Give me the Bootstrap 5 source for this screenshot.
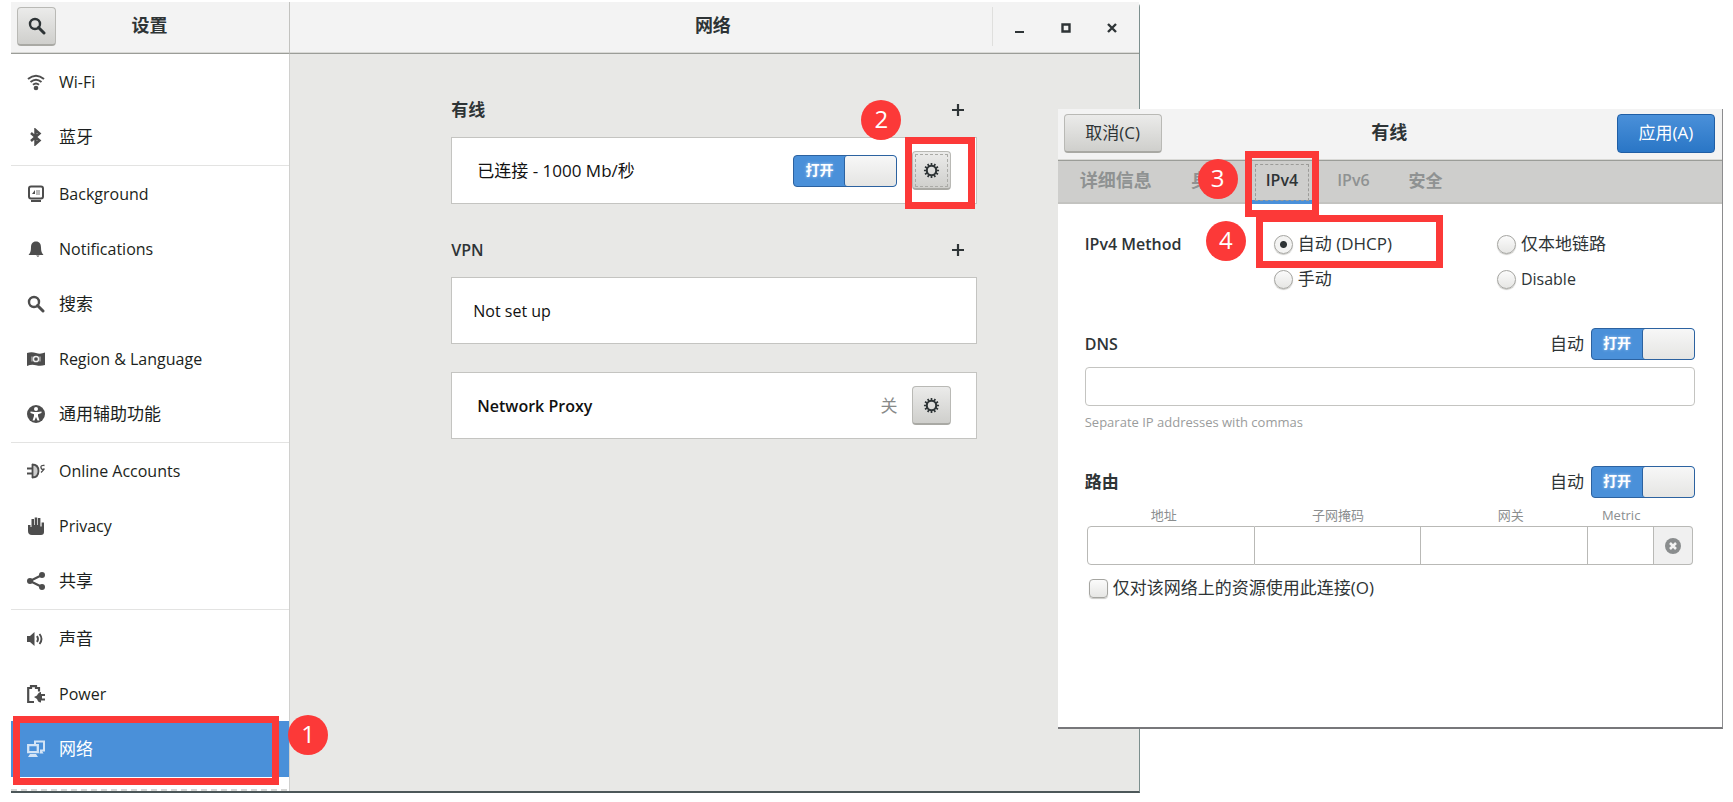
<!DOCTYPE html>
<html lang="zh-CN">
<head>
<meta charset="utf-8">
<meta name="viewport" content="width=device-width, initial-scale=1">
<title>设置 - 网络</title>
<link href="https://cdn.jsdelivr.net/npm/bootstrap@5.3.0/dist/css/bootstrap.min.css" rel="stylesheet">
<script src="https://cdn.jsdelivr.net/npm/bootstrap@5.3.0/dist/js/bootstrap.bundle.min.js"></script>
<style>
  :root { --ink: #2e3436; --blue: #4a90d9; --red: #fc3938; --line: #c4c4c1; --panel: #e8e8e6; }
  body { font-family: "Open Sans", "Noto Sans CJK SC", sans-serif; font-size: 16px; line-height: 24px; color: var(--ink); background: #fff; }
  .zh { font-size: 17px; }
  .title-zh { font-size: 18px; font-weight: 700; }
  .desktop { padding: 2px 10px 10px 11px; }

  /* windows */
  .main-window { flex: 1129 1 0; min-width: 0; border-right: 1px solid #7c8f8e; border-bottom: 2px solid #4c5759; border-radius: 0 5px 0 0; background: var(--panel); }
  .dialog-window { flex: 665 1 0; min-width: 0; margin: 107px 0 0 -82px; padding-bottom: 127px; background: #fff; border-right: 1px solid #8c8c8e; border-bottom: 2px solid #77777a; z-index: 2; }
  .sidebar { width: 279px; background: #fff; border-right: 1px solid #d0d0ce; }
  .bar { height: 52px; background: #f3f3f3; border-bottom: 1px solid #9b9d98; box-shadow: inset 0 -1px #d9d9d6; padding-bottom: 3px; }
  .side-bar { width: 279px; padding-left: 6px; border-right: 1px solid #c2c2bf; }
  .side-bar h1 { padding-right: 46px; }
  .dialog-bar { padding: 0 7px 3px 6px; }

  /* buttons */
  .gbtn { height: 39px; padding: 0; border: 1px solid #b9b9b5; border-bottom: 2px solid #a9a9a4; border-radius: 4px; background: linear-gradient(#ebebea, #cfcfcc); color: var(--ink); }
  .gbtn-square { width: 39px; }
  .gbtn-wide { width: 98px; }
  .gbtn-apply { border-color: #1f5ea5; border-bottom-width: 1px; background: linear-gradient(#4a90d9, #2a76c6); color: #fff; }
  .gbtn-focus { outline: 1px dashed #aaaaa6; outline-offset: -4px; }
  .flat { border: 0; background: none; padding: 0; color: var(--ink); }
  .win-btn { width: 46px; height: 39px; }
  .win-sep { width: 1px; height: 39px; background: #dfdfdd; }

  /* sidebar */
  .side-link { height: 55px; padding-left: 16px; color: #1c1f20; text-decoration: none; }
  .side-link svg { width: 18px; height: 18px; margin-right: 14px; color: #4d4d4d; flex: none; }
  .side-link.current { height: 56px; background: var(--blue); color: #fff; }
  .side-link.current svg { color: #d3e4f6; }
  .group-end { border-bottom: 1px solid #e3e3e2; padding-bottom: 1px; }
  .group-last { padding-top: 1px; }
  .side-more { height: 2px; margin-top: 12px; background: repeating-linear-gradient(90deg, #d6d6d4 0 6px, #fff 6px 10px); }

  /* network page */
  .net-page { width: 62%; padding-top: 44px; }
  .sec-head { height: 24px; padding-right: 13px; font-weight: 600; }
  .sec-head-next { margin-top: 34px; }
  .sec-box { height: 67px; margin-top: 15px; border: 1px solid var(--line); background: #fff; padding: 0 25px; color: #111; }
  .sec-box-plain { padding-left: 21px; }
  .sec-box-alone { margin-top: 28px; }
  .sec-gap { margin-left: 15px; }
  .off-text { color: #888a89; }

  /* switch */
  .gswitch { width: 104px; height: 32px; border: 1px solid #2c62a0; border-radius: 4px; background: var(--blue); color: #fff; font-size: 14px; font-weight: 700; line-height: 28px; text-shadow: 0 0 3px #b5d3f3; cursor: pointer; overflow: hidden; }
  .gswitch .knob { width: 52px; border-left: 1px solid #2c62a0; border-radius: 3px; background: linear-gradient(#f7f7f7, #e5e5e3); }

  /* dialog */
  .tab-strip { height: 43px; padding-left: 8px; background: #cececc; border-bottom: 2px solid #c3c3c0; gap: 11px; }
  .tab-link { height: 43px; padding: 0 14px; color: #8f9292; font-weight: 600; text-decoration: none; line-height: 39px; }
  .tab-link.current { color: var(--ink); border-bottom: 4px solid var(--blue); outline: 1px dashed #9b9b98; outline-offset: -4px; }
  .form-area { padding: 28px 27px 0; }
  .method-grid { display: grid; grid-template-columns: 189fr 223fr 198fr; row-gap: 11px; }
  .pick { gap: 5px; height: 24px; }
  .pick input { appearance: none; flex: none; width: 19px; height: 19px; margin: 0; border: 1px solid #a5a5a1; border-radius: 50%; background: linear-gradient(#fbfbfb, #e6e6e4); box-shadow: 0 1px 1px #c8c8c5; }
  .pick input[type=checkbox] { border-radius: 4px; }
  .pick input[type=radio]:checked { background: radial-gradient(circle, var(--ink) 0 3px, #f3f3f2 4px); }
  .auto-text { margin-right: 7px; }
  .dns-row { margin-top: 37px; margin-bottom: 7px; }
  .entry { height: 39px; border: 1px solid var(--line); border-radius: 4px; background: #fff; }
  .hint { margin-top: 7px; font-size: 13px; line-height: 18px; color: #9a9c9c; }
  .route-row { margin-top: 35px; }
  .route-table { margin: 6px 2px 0; border-collapse: separate; border-spacing: 0; table-layout: fixed; width: calc(100% - 4px); }
  .route-table th { padding: 0; height: 22px; font-size: 13px; line-height: 20px; font-weight: 400; color: #8b8e8f; text-align: center; }
  .route-table th:first-child { padding-right: 14px; }
  .route-table th:nth-child(3) { padding-left: 12px; }
  .route-table td { padding: 0; height: 39px; border: 1px solid #b9b9b6; border-left-width: 0; }
  .route-table td:first-child { border-left-width: 1px; border-radius: 4px 0 0 4px; }
  .route-table td:last-child { border-radius: 0 4px 4px 0; background: #f0f0f0; }
  .route-table input { display: block; width: 100%; height: 37px; border: 0; background: none; }
  .only-row { margin: 11px 4px 0; }

  /* numbered call-outs that lie over the windows */
  .frame { position: absolute; border: 7px solid var(--red); pointer-events: none; z-index: 3; }
  .step { position: absolute; width: 40px; height: 40px; border-radius: 50%; background: var(--red); color: #fff; font-size: 24px; line-height: 37px; text-align: center; z-index: 4; }
  .frame-1 { left: 2px; right: 10px; top: -5px; height: 69px; }
  .step-1 { right: -39px; top: -6px; }
  .frame-2 { left: -7px; top: -14px; width: 70px; height: 72px; }
  .step-2 { left: -51px; top: -51px; }
  .frame-3 { left: -7px; right: -7px; top: -10px; height: 66px; }
  .step-3 { left: -54px; top: -2px; }
  .frame-4 { left: -18px; top: -17px; width: 187px; height: 53px; }
  .step-4 { left: -68px; top: -11px; }
</style>
</head>
<body>
<svg class="d-none">
  <symbol id="i-search" viewBox="0 0 18 18"><circle cx="7" cy="7" r="5" fill="none" stroke="currentColor" stroke-width="2.4"/><path d="M10.500 10.500 L16 16" stroke="currentColor" stroke-width="3" stroke-linecap="round"/></symbol>
  <symbol id="i-gear" viewBox="0 0 18 18"><circle cx="9" cy="9" r="5" fill="none" stroke="currentColor" stroke-width="2.200"/><g stroke="currentColor" stroke-width="1.800"><path d="M9 1v3M9 14v3M1 9h3M14 9h3M5 2.100l1.500 2.600M11.500 13.300l1.500 2.600M2.100 5l2.600 1.500M13.300 11.500l2.600 1.500M13 2.100l-1.500 2.600M6.500 13.300l-1.500 2.600M15.900 5l-2.600 1.500M4.700 11.500l-2.600 1.500"/></g></symbol>
  <symbol id="i-plus" viewBox="0 0 12 12"><path d="M6 0v12M0 6h12" stroke="currentColor" stroke-width="2.200"/></symbol>
</svg>

<div class="desktop d-flex align-items-start">
  <main class="main-window">
    <header class="d-flex">
      <div class="bar side-bar d-flex align-items-center flex-shrink-0">
        <button class="gbtn gbtn-square d-flex align-items-center justify-content-center flex-shrink-0" type="button" aria-label="搜索"><svg width="18" height="18"><use href="#i-search"/></svg></button>
        <h1 class="title-zh m-0 flex-grow-1 text-center">设置</h1>
      </div>
      <div class="bar d-flex align-items-center flex-grow-1">
        <div class="flex-grow-1 ps-5"></div>
        <h2 class="title-zh m-0 ms-5 ps-5">网络</h2>
        <div class="flex-grow-1"></div>
        <span class="win-sep"></span>
        <div class="d-flex px-1">
          <button class="flat win-btn" type="button" aria-label="最小化"><svg width="12" height="12"><path d="M1 9h9v2H1z" fill="currentColor"/></svg></button>
          <button class="flat win-btn" type="button" aria-label="最大化"><svg width="12" height="12"><path d="M2.500 2.500h7v7h-7z" fill="none" stroke="currentColor" stroke-width="2.400"/></svg></button>
          <button class="flat win-btn" type="button" aria-label="关闭"><svg width="12" height="12"><path d="M2 2l8 8M10 2l-8 8" stroke="currentColor" stroke-width="2.400"/></svg></button>
        </div>
      </div>
    </header>
    <div class="d-flex">
      <nav class="sidebar flex-shrink-0">
        <div class="group-end">
          <a class="side-link d-flex align-items-center" href="#"><svg viewBox="0 0 18 18"><g fill="none" stroke="currentColor" stroke-width="2"><path d="M1 6q8-6.500 16 0"/><path d="M3.500 9q5.500-4.500 11 0"/><path d="M6 11.800q3-2.500 6 0"/></g><circle cx="9" cy="15" r="2.300" fill="currentColor"/></svg>Wi-Fi</a>
          <a class="side-link zh d-flex align-items-center" href="#"><svg viewBox="0 0 18 18"><path d="M4 5l8.500 7.500L8.500 16V2l4 3.500L4 13" fill="none" stroke="currentColor" stroke-width="2.500"/></svg>蓝牙</a>
        </div>
        <div class="group-end">
          <a class="side-link d-flex align-items-center" href="#"><svg viewBox="0 0 18 18"><rect x="2" y="1.500" width="14" height="12" rx="2" fill="none" stroke="currentColor" stroke-width="2"/><path d="M9 5h4v5H9z" fill="#bbb"/><path d="M8 5v4H5z M4 15h10v2H4z" fill="currentColor"/></svg>Background</a>
          <a class="side-link d-flex align-items-center" href="#"><svg viewBox="0 0 18 18"><path d="M9 1.500c3.500 0 5 2.500 5 6 0 4 .8 5.500 2.500 7.500h-15C3.200 13 4 11.500 4 7.500c0-3.500 1.500-6 5-6z" fill="currentColor"/><path d="M9 15.500h3.500l-1.500 1.500z" fill="currentColor"/></svg>Notifications</a>
          <a class="side-link zh d-flex align-items-center" href="#"><svg><use href="#i-search"/></svg>搜索</a>
          <a class="side-link d-flex align-items-center" href="#"><svg viewBox="0 0 18 18"><path d="M0 3q4.500-1.500 9 0t9-.5v12.500q-4.500 1.500-9 .2t-9 .8z" fill="currentColor"/><circle cx="9" cy="9" r="2.600" fill="none" stroke="#eee" stroke-width="1.500"/><path d="M5 6.500v5M13 6.500v5" stroke="#ccc"/></svg>Region &amp; Language</a>
          <a class="side-link zh d-flex align-items-center" href="#"><svg viewBox="0 0 18 18"><circle cx="9" cy="9" r="9" fill="currentColor"/><circle cx="9" cy="4" r="2" fill="#fff"/><path d="M3.500 6.500l4 .5h3l4-.5v1.500l-3.500 1.200V11l1.500 4.500h-2L9 12l-1.500 3.500h-2L7 11V9.200L3.500 8z" fill="#fff"/></svg>通用辅助功能</a>
        </div>
        <div class="group-end">
          <a class="side-link d-flex align-items-center" href="#"><svg viewBox="0 0 18 18"><path d="M5.500 2c4.500 0 6.500 2.500 6.500 7s-2 7-6.500 7z" fill="#ccc"/><path d="M5.500 2v14M5 2.500c4.500 0 6.500 2.500 6.500 6.500s-2 6.500-6.500 6.500M0 6.500h5M0 11.500h5" fill="none" stroke="currentColor" stroke-width="1.800"/><path d="M17.500 3.500q-4-.5-3.500 2t2.500 1.500-2.500 3.500" fill="none" stroke="currentColor" stroke-width="1.300"/></svg>Online Accounts</a>
          <a class="side-link d-flex align-items-center" href="#"><svg viewBox="0 0 18 18"><path d="M1 8h2.500v2h1V2H7v6h.7V.5h2.500V8h.7V1h2.500v8.500h1.200V5.500H17V15q0 3-3 3H5q-4 0-4-4z" fill="currentColor"/></svg>Privacy</a>
          <a class="side-link zh d-flex align-items-center" href="#"><svg viewBox="0 0 18 18"><path d="M15 3L3 9l12 6" fill="none" stroke="currentColor" stroke-width="2.200"/><g fill="currentColor"><circle cx="15" cy="3" r="3"/><circle cx="3" cy="9" r="3"/><circle cx="15" cy="15" r="3"/></g></svg>共享</a>
        </div>
        <div class="group-last">
          <a class="side-link zh d-flex align-items-center" href="#"><svg viewBox="0 0 18 18"><path d="M0 6h3l4.500-4v14L3 12H0z" fill="currentColor"/><path d="M10 6q2 3 0 6M12.500 4q4 5 0 10" fill="none" stroke="currentColor" stroke-width="1.900"/></svg>声音</a>
          <a class="side-link d-flex align-items-center" href="#"><svg viewBox="0 0 18 18"><path d="M7 17H1.200V3H4V1.200h5V3h3v3.500" fill="none" stroke="currentColor" stroke-width="2.200"/><path d="M7 12l3-1.500q1.500-3.500 4-3.500v2h4v2h-3v2.500h3v2h-4v2q-3 0-4-3.500z" fill="currentColor"/></svg>Power</a>
          <div class="position-relative">
            <a class="side-link zh current d-flex align-items-center" href="#" aria-current="page"><svg viewBox="0 0 18 18"><path d="M8 4V1.500h9v9h-4" fill="none" stroke="currentColor" stroke-width="2"/><path d="M1.200 5.200h9.600v7H1.200z" fill="none" stroke="currentColor" stroke-width="2.300"/><path d="M3 14h6l2 3H1zM13 11h2l1.500 2.500h-4z" fill="currentColor"/></svg>网络</a>
            <span class="frame frame-1"></span><span class="step step-1">1</span>
          </div>
        </div>
        <div class="side-more"></div>
      </nav>

      <section class="flex-grow-1">
        <div class="net-page mx-auto">
          <div class="sec-head zh d-flex align-items-center justify-content-between">有线<button class="flat d-flex" type="button" aria-label="添加有线"><svg width="12" height="12"><use href="#i-plus"/></svg></button></div>
          <div class="sec-box d-flex align-items-center">
            <span class="me-auto zh">已连接 - 1000 Mb/秒</span>
            <label class="gswitch d-flex"><input class="visually-hidden" type="checkbox" role="switch" checked><span class="flex-grow-1 text-center">打开</span><span class="knob"></span></label>
            <div class="position-relative sec-gap">
              <button class="gbtn gbtn-square gbtn-focus d-flex align-items-center justify-content-center" type="button" aria-label="有线选项"><svg width="17" height="17"><use href="#i-gear"/></svg></button>
              <span class="frame frame-2"></span><span class="step step-2">2</span>
            </div>
          </div>
          <div class="sec-head sec-head-next d-flex align-items-center justify-content-between">VPN<button class="flat d-flex" type="button" aria-label="添加 VPN"><svg width="12" height="12"><use href="#i-plus"/></svg></button></div>
          <div class="sec-box sec-box-plain d-flex align-items-center"><span>Not set up</span></div>
          <div class="sec-box sec-box-alone d-flex align-items-center">
            <strong class="me-auto fw-semibold">Network Proxy</strong><span class="off-text zh">关</span>
            <button class="gbtn gbtn-square d-flex align-items-center justify-content-center sec-gap" type="button" aria-label="代理选项"><svg width="17" height="17"><use href="#i-gear"/></svg></button>
          </div>
        </div>
      </section>
    </div>
  </main>

  <section class="dialog-window position-relative" role="dialog" aria-labelledby="dlg-title">
    <header class="bar dialog-bar d-flex align-items-center justify-content-between">
      <button class="gbtn gbtn-wide zh" type="button">取消(C)</button>
      <h2 id="dlg-title" class="title-zh m-0">有线</h2>
      <button class="gbtn gbtn-wide gbtn-apply zh" type="button">应用(A)</button>
    </header>
    <nav class="tab-strip d-flex">
      <a class="tab-link title-zh" href="#">详细信息</a>
      <a class="tab-link title-zh" href="#">身份</a>
      <div class="position-relative">
        <a class="tab-link current d-block" href="#" aria-current="true">IPv4</a>
        <span class="frame frame-3"></span><span class="step step-3">3</span>
      </div>
      <a class="tab-link" href="#">IPv6</a>
      <a class="tab-link zh" href="#">安全</a>
    </nav>
    <form class="form-area">
      <div class="method-grid">
        <span class="fw-semibold">IPv4 Method</span>
        <div class="position-relative">
          <label class="pick d-flex align-items-center zh"><input type="radio" name="method" checked>自动 (DHCP)</label>
          <span class="frame frame-4"></span><span class="step step-4">4</span>
        </div>
        <label class="pick d-flex align-items-center zh"><input type="radio" name="method">仅本地链路</label>
        <span></span>
        <label class="pick d-flex align-items-center zh"><input type="radio" name="method">手动</label>
        <label class="pick d-flex align-items-center"><input type="radio" name="method">Disable</label>
      </div>

      <div class="d-flex align-items-center dns-row">
        <label class="fw-semibold me-auto" for="dns">DNS</label><span class="zh auto-text">自动</span>
        <label class="gswitch d-flex"><input class="visually-hidden" type="checkbox" role="switch" aria-label="DNS 自动" checked><span class="flex-grow-1 text-center">打开</span><span class="knob"></span></label>
      </div>
      <input id="dns" class="entry w-100 d-block" type="text">
      <div class="hint">Separate IP addresses with commas</div>

      <div class="d-flex align-items-center route-row">
        <span class="zh fw-bold me-auto">路由</span><span class="zh auto-text">自动</span>
        <label class="gswitch d-flex"><input class="visually-hidden" type="checkbox" role="switch" aria-label="路由 自动" checked><span class="flex-grow-1 text-center">打开</span><span class="knob"></span></label>
      </div>
      <table class="route-table">
        <colgroup><col style="width:27.7%"><col style="width:27.5%"><col style="width:27.5%"><col style="width:10.9%"><col></colgroup>
        <thead><tr><th id="r1">地址</th><th id="r2">子网掩码</th><th id="r3">网关</th><th id="r4">Metric</th><th></th></tr></thead>
        <tbody><tr>
          <td><input type="text" aria-labelledby="r1"></td><td><input type="text" aria-labelledby="r2"></td><td><input type="text" aria-labelledby="r3"></td><td><input type="text" aria-labelledby="r4"></td>
          <td><button class="flat d-flex mx-auto" type="button" aria-label="删除"><svg width="16" height="16"><circle cx="8" cy="8" r="8" fill="#8a8d8e"/><path d="M5 5l6 6M11 5l-6 6" stroke="#f4f4f4" stroke-width="2.500"/></svg></button></td>
        </tr></tbody>
      </table>
      <label class="pick only-row d-flex align-items-center zh"><input type="checkbox">仅对该网络上的资源使用此连接(O)</label>
    </form>
  </section>
</div>
</body>
</html>
